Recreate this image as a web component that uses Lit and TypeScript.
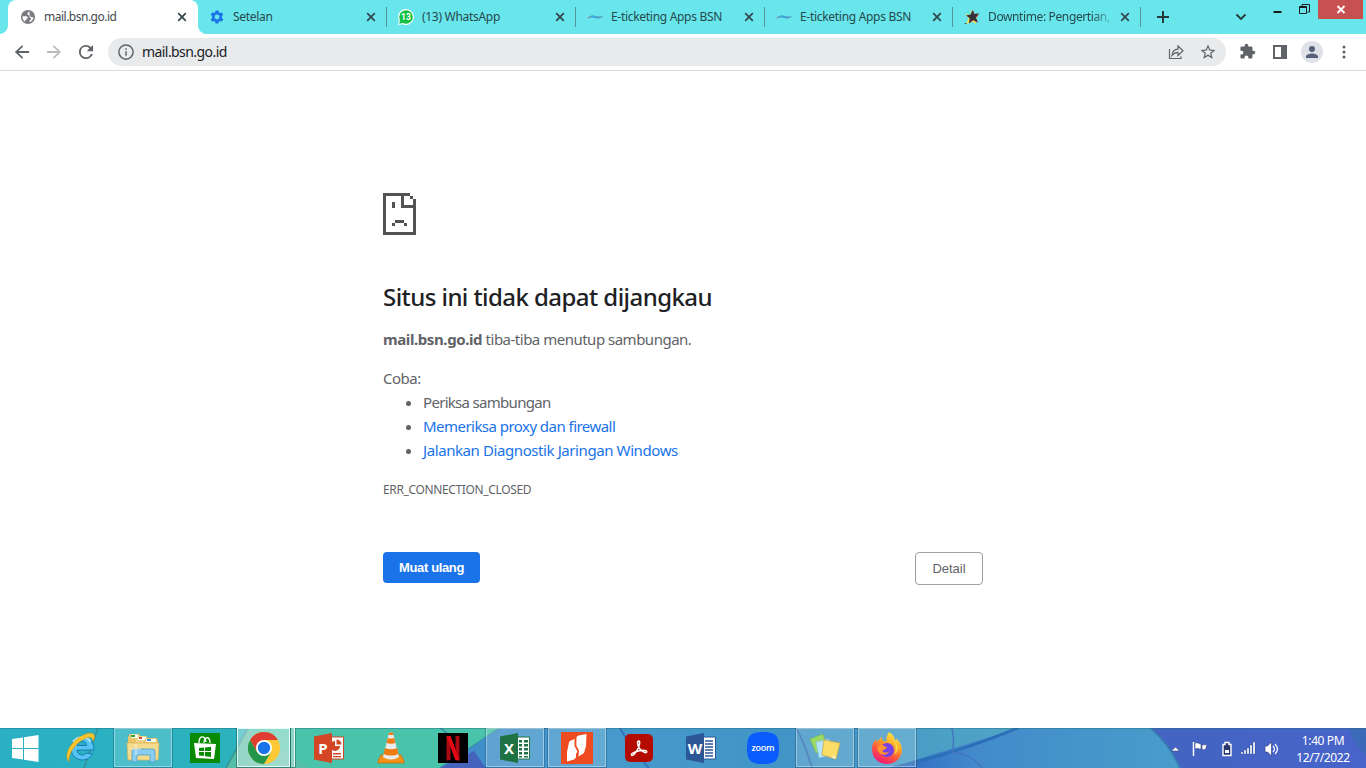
import { LitElement, html, css, svg, nothing } from "lit";
import { customElement } from "lit/decorators.js";
import { classMap } from "lit/directives/class-map.js";

const globe = svg`<svg width="16" height="16" viewBox="0 0 16 16"><circle cx="8" cy="8" r="7.100" fill="#7b7d80"/><path d="M2.500 7.300h3.600c1.200 0 1.900.8 1.900 1.900H6.500v1.900H5.200v1.700C3.300 11.700 2.200 9.700 2.500 7.300z" fill="#fff"/><path d="M9.500 2.700C8.300 3 7.500 3.600 7.500 4.700c0 .9.600 1.500 1.500 1.500h1.200c0 1.300.6 2 1.600 2h1.700c-.2 2.300-1.800 4.300-4 4.900V11.400c1 0 1.500-.6 1.500-1.400 0-.9-.5-1.500-1.400-1.500" fill="#fff"/></svg>`;
const gear = svg`<svg width="16" height="16" viewBox="0 0 16 16"><path fill="#1a73e8" d="M6.500 1.500h3l.4 1.800 1 .6 1.900-.7 1.500 2.600-1.400 1.300v1.800l1.400 1.300-1.500 2.600-1.900-.7-1 .6-.4 1.800h-3l-.4-1.800-1-.6-1.900.7-1.500-2.600 1.400-1.300V7.100L1.700 5.800l1.500-2.600 1.900.7 1-.6z"/><circle cx="8" cy="8" r="2.400" fill="#68e6ec"/></svg>`;
const whatsapp = svg`<svg width="16" height="16" viewBox="0 0 16 16"><path d="M8 0a8 8 0 1 1-3.600 15.200L0 16l1-4.200A8 8 0 0 1 8 0z" fill="#fff"/><circle cx="8" cy="8" r="6.800" fill="#12c143"/><path d="M1.300 14.800 2 11l3 3z" fill="#12c143"/><text x="8" y="11" text-anchor="middle" font-family="Roboto" font-weight="700" font-size="8.500" fill="#fff">13</text></svg>`;
const swoosh = svg`<svg width="16" height="16" viewBox="0 0 16 16"><path d="M1 9C3 6.200 5.500 5.500 8 6.800c2 1 5 .7 8 .8-2 1.800-5 2.300-8 1.500C6 8.300 3.500 8.500 1 9z" fill="#39a9dc"/><path d="M0 9.200c1-1.200 2.500-1.600 4-1.600L3.500 9z" fill="#8294a6"/><path d="M9 7.600c2 .4 4.500.1 7 0-2 1.500-4 1.900-6 1.600z" fill="#6394b4"/></svg>`;
const star = svg`<svg width="16" height="16" viewBox="0 0 16 16"><path d="M6 .8 7.500 5.700 1 5.400l4 3.600-3 6 6-3 4 3-1-5 3-4-4-.4z" fill="#ffe23d"/><path d="m9 1.300 1.200 4 4.300-.3-3 3.500 2 4.700-4.700-2.500L4.800 14l1.100-4.800-3.500-3 4.600-.3z" fill="#e24646" transform="translate(.5 .5)"/><path d="m8.500 1 1.600 3.900 4.900-.6-3.300 3.900 2 5-4.700-2.200-4 3.200.6-5.200L2 6.500l4.700-1z" fill="#343238"/><path d="M.8 14h1.500v1H.8z" fill="#344"/></svg>`;

const closeGlyph = svg`<svg width="16" height="16" viewBox="0 0 16 16"><path d="m4.200 4.200 7.600 7.600m0-7.600-7.600 7.600" stroke="#33464a" stroke-width="1.700" fill="none"/></svg>`;
const m24 = (d: string, color = "#5f6368", size = 20) =>
  svg`<svg width=${size} height=${size} viewBox="0 0 24 24"><path d=${d} fill=${color}/></svg>`;

const BACK = "M20.500 10.800H7.830l5.590-5.390L12 4l-8.500 8 8.500 8 1.410-1.410L7.830 13.200H20.500z";
const FORWARD = "m12 4-1.410 1.410L16.170 10.800H3.500v2.400h12.670l-5.580 5.390L12 20l8.500-8z";
const RELOAD = "M18 6A8.500 8.500 0 0 0 12 3.500a8.500 8.500 0 1 0 8.200 10.800h-2.500A6.200 6.200 0 1 1 12 5.800c1.700 0 3.200.7 4.300 1.800L13 11h7.500V3.500z";
const INFO = "M11 17h2v-6h-2zm1-15.500a10.500 10.500 0 1 0 0 21 10.500 10.500 0 0 0 0-21m0 19a8.500 8.500 0 1 1 0-17 8.500 8.500 0 0 1 0 17M11 9h2V7h-2z";
const STAR = "m22 9.240-7.190-.620L12 2 9.190 8.630 2 9.240l5.460 4.730L5.820 21 12 17.270 18.180 21l-1.630-7.030zM12 15.400l-3.760 2.270 1-4.280-3.320-2.880 4.380-.380L12 6.100l1.710 4.040 4.380.380-3.320 2.880 1 4.280z";
const PUZZLE = "M20.500 11H19V7c0-1.100-.900-2-2-2h-4V3.500a2.500 2.500 0 0 0-5 0V5H4a2 2 0 0 0-2 2v3.800h1.500a2.700 2.700 0 0 1 0 5.400H2V20c0 1.100.900 2 2 2h3.800v-1.500a2.700 2.700 0 0 1 5.400 0V22H17c1.100 0 2-.900 2-2v-4h1.500a2.500 2.500 0 0 0 0-5";
const PERSON = "M12 12a4 4 0 1 0 0-8 4 4 0 0 0 0 8m0 2c-2.670 0-8 1.340-8 4v2h16v-2c0-2.660-5.330-4-8-4";

interface Tab { cls: string; icon: unknown; title: string; active?: boolean; }
const tabs: Tab[] = [
  { cls: "t1", icon: globe, title: "mail.bsn.go.id", active: true },
  { cls: "t2", icon: gear, title: "Setelan" },
  { cls: "t3", icon: whatsapp, title: "(13) WhatsApp" },
  { cls: "t4", icon: swoosh, title: "E-ticketing Apps BSN" },
  { cls: "t5", icon: swoosh, title: "E-ticketing Apps BSN" },
  { cls: "t6", icon: star, title: "Downtime: Pengertian," },
];

@customElement("browser-tabs")
class BrowserTabs extends LitElement {
  static styles = css`
    :host { display: flex; height: 34px; background: #68e6ec; padding-left: 8px; font: 12px/34px "Noto Sans", "Open Sans", sans-serif; color: #26494c; }
    svg { display: block; flex: none; }
    .tab { box-sizing: border-box; width: 189px; height: 34px; padding: 0 8px 0 11px; display: flex; align-items: center; position: relative; }
    .t5, .t6 { width: 188px; }
    .title { flex: 1; min-width: 0; margin-left: 8px; white-space: nowrap; letter-spacing: -0.3px; }
    .t1 .title { color: #45494d; letter-spacing: -0.5px; }
    .t6 .title { letter-spacing: -0.38px; -webkit-mask-image: linear-gradient(90deg, #000 80%, transparent 100%); mask-image: linear-gradient(90deg, #000 80%, transparent 100%); }
    .tab:not(.active)::after { content: ""; position: absolute; right: 0; top: 7px; width: 1px; height: 20px; background: #559397; }
    .active { width: 190px; padding-left: 12px; background: #fff; border-radius: 8px 8px 0 0; }
    .active::before, .active::after { content: ""; position: absolute; bottom: 0; width: 8px; height: 8px; }
    .active::before { left: -8px; background: radial-gradient(circle at 0 0, transparent 7.5px, #fff 8px); }
    .active::after { right: -8px; background: radial-gradient(circle at 100% 0, transparent 7.5px, #fff 8px); }
    .plus { margin: 9px 0 0 14px; }
    .down { margin: 9px 0 0 auto; }
    .win { display: flex; margin-left: 24px; height: 19px; }
    .min { margin: 0 17px 0 0; }
    .max { margin-right: 8px; }
    .x { width: 45px; height: 19px; background: #c75050; margin-right: 3px; }
  `;
  render() {
    return html`
      ${tabs.map((t) => html`<div class=${classMap({ tab: true, [t.cls]: true, active: !!t.active })}>${t.icon}<span class="title">${t.title}</span>${closeGlyph}</div>`)}
      <svg class="plus" width="16" height="16" viewBox="0 0 16 16"><path d="M8 2v12M2 8h12" stroke="#26393b" stroke-width="2"/></svg>
      <svg class="down" width="16" height="16" viewBox="0 0 16 16"><path d="m3.500 5.500 4.500 4.500 4.500-4.500" fill="none" stroke="#26393b" stroke-width="1.800"/></svg>
      <div class="win">
        <svg class="min" width="9" height="19" viewBox="0 0 9 19"><path d="M.5 12h8" stroke="#1c1c1c" stroke-width="2"/></svg>
        <svg class="max" width="11" height="19" viewBox="0 0 11 19"><path d="M3 6V4.500h7.500V12H8.500M.5 6.500h7v7h-7zM.5 7.500h7" fill="none" stroke="#1c1c1c"/></svg>
        <div class="x"><svg width="45" height="19" viewBox="0 0 45 19"><path d="m19.500 6 7 7M26.500 6l-7 7" stroke="#fff" stroke-width="1.900"/></svg></div>
      </div>`;
  }
}

@customElement("browser-toolbar")
class BrowserToolbar extends LitElement {
  static styles = css`
    :host { box-sizing: border-box; display: flex; align-items: center; height: 37px; padding: 0 12px 1px; background: #fff; border-bottom: 1px solid #dadce0; }
    svg { display: block; flex: none; }
    .nav { display: flex; gap: 12px; width: 96px; flex: none; }
    .omni { box-sizing: border-box; display: flex; flex: none; align-items: center; width: 1118px; height: 28px; border-radius: 14px; background: #e9eaec; padding: 0 9px 0 9px; }
    .url { flex: 1; margin-left: 7px; font: 14px/28px "Noto Sans", "Open Sans", sans-serif; letter-spacing: -0.57px; color: #202124; }
    .share { margin-right: 14px; }
    .actions { display: flex; flex: none; align-items: center; margin-left: 13px; }
    .panel { margin-left: 14px; }
    .avatar { width: 22px; height: 22px; border-radius: 50%; background: #dee1e6; display: grid; place-items: center; margin: 0 12px 0 11px; }
  `;
  render() {
    return html`
      <div class="nav">${m24(BACK)}${m24(FORWARD, "#babcbe")}${m24(RELOAD)}</div>
      <div class="omni">${m24(INFO, "#5f6368", 18)}<span class="url">mail.bsn.go.id</span>
        <svg class="share" width="18" height="18" viewBox="0 0 18 18"><path d="M2.500 6v9.500h11.500V13.500M5 12.500c.3-4.200 2.600-6.300 6-6.400V3l5 4.800-5 4.700V9.400c-2.600 0-4.400.8-6 3.100z" fill="none" stroke="#5f6368" stroke-width="1.200"/></svg>
        ${m24(STAR, "#5f6368", 18)}
      </div>
      <div class="actions">
        ${m24(PUZZLE, "#5f6368", 17)}
        <svg class="panel" width="20" height="20" viewBox="0 0 20 20"><path d="M3 3h14v14H3zM5 5v10h6V5z" fill-rule="evenodd" fill="#5f6368"/></svg>
        <div class="avatar">${m24(PERSON, "#55617a", 18)}</div>
        <svg width="18" height="18" viewBox="0 0 18 18" fill="#5f6368"><circle cx="9" cy="4" r="1.500"/><circle cx="9" cy="9" r="1.500"/><circle cx="9" cy="14" r="1.500"/></svg>
      </div>`;
  }
}

@customElement("error-page")
class ErrorPage extends LitElement {
  static styles = css`
    :host { display: block; flex: 1; background: #fff; color: #5f6368; font: 15px/24px "Noto Sans", "Open Sans", sans-serif; }
    .box { width: 600px; margin: 0 auto; padding-top: 122px; }
    svg { display: block; }
    h1 { margin: 45px 0 0; font-size: 24px; font-weight: 500; line-height: 33px; color: #202124; letter-spacing: -0.56px; white-space: nowrap; }
    p { margin: 14px 0 0; letter-spacing: -0.5px; }
    strong { letter-spacing: -0.4px; }
    .try { margin-top: 15px; }
    ul { margin: 0; padding-left: 40px; }
    .l1 { letter-spacing: -0.7px; }
    .l2 { letter-spacing: -0.54px; }
    .l3 { letter-spacing: -0.41px; }
    a { color: #1a73e8; }
    .code { margin-top: 16px; font-size: 12px; letter-spacing: -0.36px; }
    .row { display: flex; justify-content: space-between; align-items: flex-start; margin-top: 50px; }
    button { box-sizing: border-box; margin: 0; height: 31px; width: 97px; padding: 0; border: 0; border-radius: 4px; background: #1a73e8; color: #fff; font: 700 13px "Liberation Sans", sans-serif; letter-spacing: -0.35px; }
    .detail { width: 68px; height: 33px; border: 1px solid #9aa0a6; background: #fff; color: #5f6368; font-weight: 400; letter-spacing: 0; }
  `;
  render() {
    return html`<div class="box">
      <svg width="33" height="42" viewBox="0 0 11 14" shape-rendering="crispEdges"><path fill="#535353" d="M0 0h9v1H1v12h9V5H6V1h1v3h3V2h1v12H0zM9 1h1v1H9zM3 3h1v2H3zM4 9h3v1H4zM3 10h1v1H3zM7 10h1v1H7z"/></svg>
      <h1>Situs ini tidak dapat dijangkau</h1>
      <p><strong>mail.bsn.go.id</strong> tiba-tiba menutup sambungan.</p>
      <p class="try">Coba:</p>
      <ul><li class="l1">Periksa sambungan</li><li class="l2"><a>Memeriksa proxy dan firewall</a></li><li class="l3"><a>Jalankan Diagnostik Jaringan Windows</a></li></ul>
      <p class="code">ERR_CONNECTION_CLOSED</p>
      <div class="row"><button>Muat ulang</button><button class="detail">Detail</button></div>
    </div>`;
  }
}

const ie = svg`<svg width="32" height="36" viewBox="0 0 32 36"><path d="M27.500 24a11.500 11.500 0 1 1 1-8.500c.5 1.500.5 3 .4 4.500H12c.2 3.500 2.500 5 5.200 5 2 0 3.200-.6 4-1.800zM12.200 15.500h9.400c-.3-2.800-2-4.400-4.600-4.400s-4.300 1.600-4.800 4.400z" fill="#56c3f2" stroke="#1679b9" stroke-width="1"/><path d="M8 12c2-3 5-4.800 9-4.800 4 0 7 1.800 8.500 4.500" stroke="#a9e7fc" stroke-width="2" fill="none"/><path d="M4 31.500C-1.500 27 4 14 14 7.500 21 2.500 29 1.500 29.500 6c.2 1.800-.5 3.500-1.500 5 .2-3.500-3-5-8.500-2.300C12 12.500 3 22 4 31.500z" fill="#f8c62b" stroke="#d8961b" stroke-width=".6"/></svg>`;
const explorer = svg`<svg width="34" height="32" viewBox="0 0 34 32"><path d="M2 5 4 2h9l2 3v22H2z" fill="#e9c66a"/><path d="M5 2.500h7V6H5z" fill="#fff"/><path d="M5 3h4v2H5z" fill="#23a63c"/><path d="m10 7 2-3h8l2 3v19H8z" fill="#efd384"/><path d="M12 5h8v3h-8z" fill="#fff"/><path d="M13 5h3v2h-3z" fill="#d0422c"/><path d="m18 9 2-3h11l1 3v17H18z" fill="#e8c368"/><path d="M20 7h10v3H20z" fill="#fff"/><path d="M21 7h4v2h-4z" fill="#318ed3"/><path d="M1 11h32l-1 17H2z" fill="#f4db8e" stroke="#d8b457" stroke-width=".7"/><path d="M6 19q0-2 2-2h19q2 0 2 2v11h-5v-7H11v7H6z" fill="#8acdf0" stroke="#4b9fc9" stroke-width=".8"/><path d="M10 12v11M5 17h10" stroke="#fff" stroke-width=".7"/></svg>`;
const store = svg`<svg width="30" height="30" viewBox="0 0 30 30"><path d="M0 0h30v30H0z" fill="#098a00"/><path d="m4 10 22 1-2 15-18-1z" fill="#fff"/><path d="M9 10c0-8 6-8 7-1M14 10c0-7 6-7 6 0" fill="none" stroke="#fff" stroke-width="1.300"/><path d="m9 15 5-.5V18H9zm6-.6 6-.7V18h-6zM9 19h5v4l-5-.5zm6 0h6v5l-6-.8z" fill="#098a00"/></svg>`;
const chrome = svg`<svg width="32" height="32" viewBox="0 0 32 32"><circle cx="16" cy="16" r="16" fill="#fcc934"/><path d="M29.860 8A16 16 0 0 0 2.140 8L9 20l7-12z" fill="#df3d32"/><path d="M2.140 8A16 16 0 0 0 16 32l7-12-7 2-7-2z" fill="#23964a"/><circle cx="16" cy="16" r="8" fill="#fff"/><circle cx="16" cy="16" r="6.200" fill="#1a73e8"/></svg>`;
const office = (letter: string, color: string, art: unknown) => svg`<svg width="30" height="30" viewBox="0 0 30 30"><path d="M17 4h12.500v22H17z" fill="#fff" stroke=${color} stroke-width="1"/>${art}<path d="m0 3.500 18-3.500v30L0 26.500z" fill=${color}/><text x="9" y="20.500" text-anchor="middle" font-family="Noto Sans" font-weight="700" font-size="15" fill="#fff">${letter}</text></svg>`;
const ppt = office("P", "#d24625", svg`<path d="M21 8a5 5 0 1 0 5 5h-5z" fill="#d24625"/><path d="M22.500 6.500a5 5 0 0 1 5 5h-5zM19 20h8v1.500h-8zM19 23h8v1.300h-8z" fill="#d24625"/>`);
const excel = office("X", "#1f7244", svg`<path d="M19 7h3v2.500h-3zm5 0h4v2.500h-4zm-5 4h3v2.500h-3zm5 0h4v2.500h-4zm-5 4h3v2.500h-3zm5 0h4v2.500h-4zm-5 4h3v2.500h-3zm5 0h4v2.500h-4zm-5 4h3v1.500h-3zm5 0h4v1.500h-4z" fill="#1f7244"/>`);
const word = office("W", "#2b5797", svg`<path d="M19 8h8M19 11h8M19 14h8M19 17h8M19 20h8M19 23h8" stroke="#2b5797" stroke-width="1.300"/>`);
const vlc = svg`<svg width="28" height="32" viewBox="0 0 28 32"><path d="M4 23h20l3 6v2H1v-2z" fill="#f29018" stroke="#ca6d0b" stroke-width=".8"/><path d="M12 1q2-1.500 4 0l6 24q-8 5-16 0z" fill="#e8eaec"/><path d="m10.800 6-1.300 5q4.500 1.500 9 0l-1.300-5q-3.200 1-6.400 0zM8 16l-1.500 6q7.500 3 15 0L20 16q-6 2.500-12 0zM12 1q2-1.500 4 0l.5 2h-5z" fill="#ee7b11"/></svg>`;
const netflix = svg`<svg width="30" height="30" viewBox="0 0 30 30"><path d="M0 0h30v30H0z"/><path d="M8.500 3h4v24l-4 .5zm9 0h4v24.500l-4-.5z" fill="#a90912"/><path d="M8.500 3h4.200l8.800 24.500-4.200-.6z" fill="#e50914"/></svg>`;
const nitro = svg`<svg width="32" height="32" viewBox="0 0 32 32"><path d="M0 0h32v32H0z" fill="#ee4b20"/><path d="M8 10.500Q8.300 9 10 8.500L13.500 7v7l3 5.500-1.500 2.500v3.500l-2 2-7 2V20z" fill="#fff"/><path d="M15.500 5.500Q15.700 4 17.500 3.500L25.500 2 25 14l-2 7-5.500 3.500.5-6-2.700-5z" fill="#fff"/></svg>`;
const acrobat = svg`<svg width="28" height="28" viewBox="0 0 28 28"><rect width="28" height="28" rx="5" fill="#b30b00"/><path d="M13.500 7c2.500-.5.500 6-1.500 9.500-2 3-4.500 6-5.500 4.500s4-3.500 8-4.300c4-.7 7.500-.5 7.200 1.200-.4 1.900-4.700 0-7.200-3.400C12.700 12 11.700 7.500 13.500 7z" fill="none" stroke="#fff" stroke-width="1.500"/></svg>`;
const zoomIcon = svg`<svg width="32" height="32" viewBox="0 0 32 32"><path d="M16 0c12.500 0 16 3.500 16 16s-3.500 16-16 16S0 28.500 0 16 3.500 0 16 0z" fill="#0b5cff"/><text x="16" y="18.500" text-anchor="middle" textLength="23" font-family="Open Sans" font-weight="600" font-size="9" fill="#fff">zoom</text></svg>`;
const sticky = svg`<svg width="32" height="28" viewBox="0 0 32 28"><path d="m1 5 13-5 5 14-12 5z" fill="#9ed867" stroke="#70b84b" stroke-width=".6"/><path d="m7 8 13-3 2 16-12 3z" fill="#b5e5fb" stroke="#7dc1e2" stroke-width=".6"/><path d="m15 6 16 3-4 16-14-4z" fill="#fbdd67" stroke="#c8a73c" stroke-width=".7"/><path d="m27 25-1-4-4 2.500z" fill="#fff5bb"/></svg>`;
const firefox = svg`<svg width="32" height="32" viewBox="0 0 32 32"><defs><linearGradient id="fx" x1=".8" y1="0" x2=".3" y2="1"><stop stop-color="#fff44f"/><stop offset=".35" stop-color="#ffae27"/><stop offset=".65" stop-color="#ff5a3c"/><stop offset="1" stop-color="#ee1478"/></linearGradient></defs><path d="M18 0c5 3 5 6 7 9 1-1 0-3 0-3 4 4 6 8 6 12 0 8-7 14-15 14S1 26 1 17c0-5 2-8 4-10 0 2 1 3 1 3 1-2 3-4 5-5-.5 2 .5 3 1.500 4l3 .5C15 6 16 3 18 0z" fill="url(#fx)"/><circle cx="16" cy="18" r="7" fill="#7742e5"/><path d="M7 14c4-3 7 1 9 1-1 3-4 2-4.500 4 1.500 2 4 2 7 0-2 5-10 5-12-1z" fill="#ff9431"/><path d="M20 7c5 4 6 10 3 16 7-5 4-13-3-16z" fill="#ffd43e"/></svg>`;

interface App { icon: unknown; state?: string; stacked?: boolean; }
const apps: App[] = [
  { icon: ie }, { icon: explorer, state: "open" }, { icon: store }, { icon: chrome, state: "front", stacked: true },
  { icon: ppt }, { icon: vlc }, { icon: netflix }, { icon: excel, state: "open" }, { icon: nitro, state: "open" },
  { icon: acrobat }, { icon: word }, { icon: zoomIcon }, { icon: sticky, state: "open" }, { icon: firefox, state: "open" },
];

@customElement("task-bar")
class TaskBar extends LitElement {
  static styles = css`
    :host { display: flex; height: 40px; position: relative; overflow: hidden; background: #4a9bc9; }
    svg { display: block; flex: none; }
    .wall { position: absolute; inset: 0; }
    .start, .app, .tray { position: relative; }
    .start { width: 50px; display: grid; place-items: center; }
    .app { width: 62px; padding: 0 2px; box-sizing: border-box; display: flex; }
    .face { box-sizing: border-box; flex: 1; height: 39px; border: 1px solid transparent; display: grid; place-items: center; }
    .open .face { background: rgba(255,255,255,.17); border-color: rgba(255,255,255,.38); outline: 1px solid rgba(20,70,110,.35); }
    .front .face { background: linear-gradient(120deg, rgba(255,255,255,.35), rgba(255,255,255,.45)); border-color: #e5fbf5; outline: 1px solid rgba(20,90,90,.55); flex: none; width: 53px; }
    .front { padding-left: 1px; }
    .edge { width: 4px; height: 39px; margin-left: 1px; background: #8fd3c5; border-right: 1px solid #e5fbf5; outline: 1px solid rgba(20,90,90,.45); box-sizing: border-box; }
    .tray { display: flex; align-items: center; margin-left: auto; }
    .clock { width: 86px; font: 12px/17px "Noto Sans", "Open Sans", sans-serif; letter-spacing: -0.4px; color: #fff; text-align: center; padding-top: 1px; }
  `;
  render() {
    return html`
      <svg class="wall" width="1366" height="40" viewBox="0 0 1366 40">
        <defs>
          <linearGradient id="a"><stop stop-color="#29b0c4"/><stop offset=".45" stop-color="#2bb2bd"/><stop offset="1" stop-color="#48c2ad"/></linearGradient>
          <linearGradient id="b"><stop stop-color="#3e8bc8"/><stop offset=".3" stop-color="#459acb"/><stop offset=".6" stop-color="#4194c6"/><stop offset="1" stop-color="#50a5c6"/></linearGradient>
          <linearGradient id="c"><stop stop-color="#2c67c4"/><stop offset=".3" stop-color="#438bcb"/><stop offset="1" stop-color="#489dca"/></linearGradient>
          <linearGradient id="d"><stop stop-color="#4264c1"/><stop offset="1" stop-color="#4864ca"/></linearGradient>
        </defs>
        <path d="M0 0h500L440 40H0z" fill="url(#a)"/><path d="M248 0h250L442 40H226z" fill="#49c3a9"/>
        <path d="m248 0 62 40h-84z" fill="#60bba7" opacity=".6"/>
        <path d="M248 0 226 40M98 0 84 40" stroke="#348589" stroke-width="2" fill="none" opacity=".6"/>
        <path d="m440 0 22 16M500 0l-60 40" stroke="#328ba0" stroke-width="1.500"/>
        <path d="M500 0h520l-120 40H440z" fill="url(#b)"/><path d="m440 40 34-17 12 17z" fill="#4563bd"/>
        <path d="M620 0q12 22 29 40M796 0q10 18 16 40" stroke="#3572b7" stroke-width="2" fill="none"/>
        <path d="M1018 0h140l24 40H890z" fill="url(#c)"/><path d="M1018 0q-60 25-126 40" stroke="#2d6eb9" stroke-width="3" fill="none"/>
        <path d="M952 0q3 15 0 24 20 2 30 16" stroke="#4377bf" stroke-width="1.500" fill="none"/>
        <path d="M1151 0h215v40h-185q-10-22-30-40z" fill="url(#d)"/><path d="M1151 0q20 18 29 40" stroke="#3977b6" stroke-width="2" fill="none"/>
        <path d="M1349 0q4 15 17 27V0z" fill="#3c69b8"/><path d="M0 .5h1366" stroke="#276f85" opacity=".45"/>
      </svg>
      <div class="start"><svg width="27" height="27" viewBox="0 0 27 27"><path d="m0 4 11-1.500V13H0zm12-1.700L26.500 0v13H12zM0 14h11v10.500L0 23zm12 0h14.500v13L12 24.700z" fill="#fff"/></svg></div>
      ${apps.map((a) => html`<div class=${classMap({ app: true, open: a.state === "open", front: a.state === "front" })}><div class="face">${a.icon}</div>${a.stacked ? html`<div class="edge"></div>` : nothing}</div>`)}
      <div class="tray">
        <svg width="112" height="40" viewBox="1168 0 112 40">
          <path d="m1171.500 23 4-4 4 4z" fill="#fff" stroke="#27366f" stroke-width=".5"/>
          <path d="M1193.500 14v14" stroke="#fff" stroke-width="1.500"/><path d="M1195 15c3-1 4 1 6 1v5c-3 0-3-1-6 0zm7 2c2 0 3-.5 5 0-1 1-.5 3-2 4.500-1 .5-2 0-3 0z" fill="#fff" stroke="#29366e" stroke-width=".5"/>
          <path d="M1225 14.500h4v2h2v11h-8v-11h2z" fill="#29376c" stroke="#fff" stroke-width="1.400"/><path d="M1225 22h4v3h-4z" fill="#fff"/>
          <path d="M1241 24h2v2h-2zm3-2h2v4h-2zm3-2h2v6h-2zm3-3h2v9h-2zm3-3h2v12h-2z" fill="#fff" stroke="#27366f" stroke-width=".3"/>
          <path d="M1265 18h2.500l4-4v14l-4-4h-2.500z" fill="#fff" stroke="#29366e" stroke-width=".6"/><path d="M1273 18q3 3 0 6m2-8q5 5 0 10" fill="none" stroke="#fff" stroke-width="1.200"/>
        </svg>
        <div class="clock">1:40 PM<br />12/7/2022</div>
      </div>`;
  }
}

@customElement("app-root")
class AppRoot extends LitElement {
  static styles = css`
    :host { display: flex; flex-direction: column; width: 1366px; height: 768px; overflow: hidden; }
  `;
  render() {
    return html`<browser-tabs></browser-tabs><browser-toolbar></browser-toolbar><error-page></error-page><task-bar></task-bar>`;
  }
}
